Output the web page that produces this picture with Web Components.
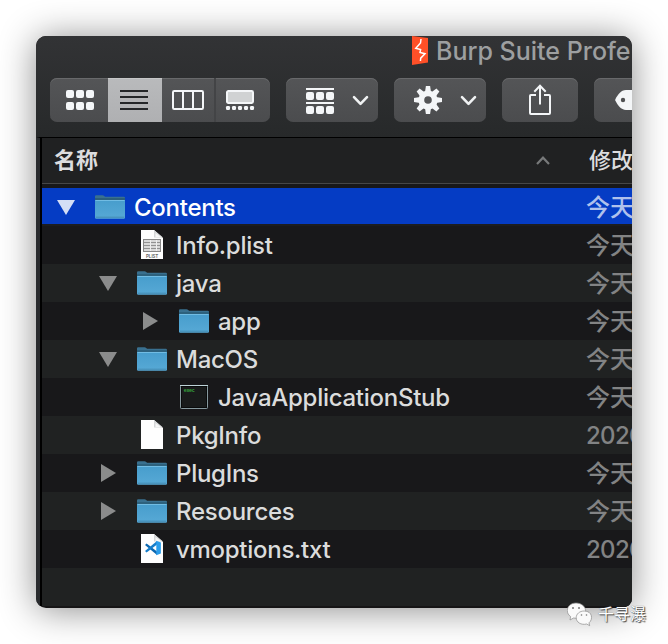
<!DOCTYPE html>
<html lang="zh">
<head>
<meta charset="utf-8">
<title>Finder</title>
<style>
html,body{margin:0;width:668px;height:644px;overflow:hidden;background:#fff}
body{font-family:Inter,"Noto Sans CJK SC",sans-serif}
</style>
</head>
<body>
<finder-page></finder-page>
<script>
const define = (name, html) => customElements.define(name, class extends HTMLElement {
  connectedCallback() {
    if (this.shadowRoot) return;
    const t = document.createElement('template');
    t.innerHTML = typeof html === 'function' ? html(this) : html;
    this.attachShadow({mode: 'open'}).append(t.content.cloneNode(true));
  }
});

const icons = {
  grid: [28, 20, '<g fill="#f4f6f8"><rect width="8" height="8" rx="2"/><rect x="10" width="8" height="8" rx="2"/><rect x="20" width="8" height="8" rx="2"/><rect y="12" width="8" height="8" rx="2"/><rect x="10" y="12" width="8" height="8" rx="2"/><rect x="20" y="12" width="8" height="8" rx="2"/></g>'],
  list: [28, 20, '<path d="M0 1h28M0 7h28M0 13h28M0 19h28" stroke="#242628" stroke-width="2"/>'],
  columns: [32, 20, '<rect x="1" y="1" width="30" height="18" rx="1.2" fill="none" stroke="#f4f6f8" stroke-width="2"/><path d="M11 1v18M21 1v18" stroke="#f4f6f8" stroke-width="2"/>'],
  gallery: [28, 20, '<rect x="1" y="1" width="26" height="12" rx="1.4" fill="#d0d2d3" stroke="#f4f6f8" stroke-width="2"/><g fill="#f4f6f8"><rect y="16" width="4" height="4" rx="1.2"/><rect x="6" y="16" width="4" height="4" rx="1.2"/><rect x="12" y="16" width="4" height="4" rx="1.2"/><rect x="18" y="16" width="4" height="4" rx="1.2"/><rect x="24" y="16" width="4" height="4" rx="1.2"/></g>'],
  group: [28, 26, '<g fill="#f4f6f8"><rect width="28" height="2"/><rect y="14" width="28" height="2"/><rect y="4" width="8" height="8" rx="2"/><rect x="10" y="4" width="8" height="8" rx="2"/><rect x="20" y="4" width="8" height="8" rx="2"/><rect y="18" width="8" height="8" rx="2"/><rect x="10" y="18" width="8" height="8" rx="2"/><rect x="20" y="18" width="8" height="8" rx="2"/></g>'],
  chevron: [16, 10, '<path d="M2 2.200 8.500 8.800 15 2.200" fill="none" stroke="#f0f2f3" stroke-width="2.600" stroke-linecap="round" stroke-linejoin="round"/>'],
  gear: [28, 28, '<g fill="#f4f6f8" transform="translate(14 14)">' + [0,45,90,135].map(a => `<path transform="rotate(${a})" d="M-2.100 -14h4.200l.9 6v16l-.9 6h-4.200l-.9-6v-16z"/>`).join('') + '<circle r="9.600"/><circle r="3.800" fill="#545557"/></g>'],
  share: [22, 31, '<path d="M7 11H1.900a.9.900 0 0 0-.9.900V29a.9.900 0 0 0 .9.900h18.200a.9.900 0 0 0 .9-.9V11.900a.9.900 0 0 0-.9-.9H15M11 20.500V2M5.300 7.800 11 1.800l5.700 6" fill="none" stroke="#f4f6f8" stroke-width="2"/>'],
  tag: [34, 20, '<path d="M.4 9.200C2.500 5 6 0 11 0h23v20H11C6 20 2.500 15 .4 10.800Q0 10 .4 9.200z" fill="#f4f6f8"/><circle cx="8" cy="10" r="2.200" fill="#505153"/>'],
  sort: [14, 9, '<path d="M1 8 7 1.700 13 8" fill="none" stroke="#77797a" stroke-width="2.200"/>'],
  burp: [16, 29, '<path d="M0 0 16 2v24.500L0 29z" fill="#ff5028"/><path d="M9 3 8.500 7 3.800 12.300l4.800 1.200L8 16.500l5 1.200-4.300 4.500L8.400 25" fill="none" stroke="#fff" stroke-width="1.500"/>'],
  down: [18, 15, '<path d="M0 0h18L9 15z" fill="currentColor"/>'],
  right: [15, 18, '<path d="M0 0v18l15-9z" fill="currentColor"/>'],
  folder: [30, 24, '<defs><linearGradient id="f" x2="0" y2="1"><stop stop-color="#479dcc"/><stop offset="1" stop-color="#57a9d6"/></linearGradient></defs><path d="M0 22V1.300Q0 .2 1.200.2h6.300q1 0 1.700.7l.9.900h18.700q1.200 0 1.200 1.200v19z" fill="#39708f"/><path d="M0 4h30" stroke="#285a75" stroke-width="1.300"/><path d="M0 5h30v17.500q0 1.200-1.200 1.200H1.200Q0 23.700 0 22.500z" fill="url(#f)"/><path d="M.5 5.500h29" stroke="#71bce3"/><path d="M.7 22.200h28.600" stroke="#448cb3"/>'],
  page: [22, 30, '<path d="M0 0h13l9 8v21H0z" fill="#fefefe"/><path d="M13 0v7.500h9z" fill="#d5d7d8"/><path d="M14.500 3v4H20z" fill="#f6f6f6"/>'],
  exec: [28, 24, '<rect x=".5" y=".5" width="27" height="23" rx=".8" fill="#191b1b" stroke="#86989d"/><path d="M0 .5h28" stroke="#bed3d8"/><rect x="1.500" y="1.500" width="25" height="21" fill="none" stroke="#090b0b"/><text x="3.800" y="7.300" textLength="11" font-family="Liberation Mono,monospace" font-weight="bold" font-size="5" fill="#35a23d">exec</text>']
};
icons.plist = [22, 30, icons.page[2] + '<rect x="2.500" y="9.500" width="17" height="12" fill="#eee" stroke="#888"/><path d="M3 12.500h16M3 15.500h16M3 18.500h16" stroke="#929292"/><path d="M3 11h16M3 14h16M3 17h16M3 20h16" stroke="#c4c4c4"/><path d="M9.500 10v11M15.500 10v11" stroke="#eee"/><text x="5" y="28" textLength="12" lengthAdjust="spacingAndGlyphs" font-family="Liberation Sans,sans-serif" font-weight="bold" font-size="4.700" fill="#666">PLIST</text>'];
icons.code = [22, 30, icons.page[2] + '<path d="M4 10.900 5.600 9.600 16 17.500V21z" fill="#0b67b1"/><path d="M4 17.100 5.600 18.400 16 10.500V7z" fill="#167dca"/><path d="m15.300 6.700 4.600 1.900v10.800l-4.600 1.900z" fill="#2a9deb"/>'];

define('ui-icon', el => {
  const [w, h, body] = icons[el.getAttribute('name')];
  return `<style>:host{display:block;flex:none;width:${w}px;height:${h}px}svg{display:block;overflow:visible}</style><svg width="${w}" height="${h}" viewBox="0 0 ${w} ${h}">${body}</svg>`;
});

define('tool-button', `<style>
:host{display:flex;box-sizing:border-box;flex:none;height:44px;border-radius:7px;overflow:hidden;align-items:center;justify-content:center;background:linear-gradient(#545557,#4b4c4e);box-shadow:inset 0 1px #68696b}
</style><slot></slot>`);

define('view-switch', `<style>
:host{display:grid;grid-template-columns:58px 54px 52px 56px;flex:none;height:44px;border-radius:7px;overflow:hidden;background:linear-gradient(#545557,#4b4c4e);box-shadow:inset 0 1px #68696b}
div{display:flex;align-items:center;box-sizing:border-box}
.first{padding-left:16px}
.on{padding-left:12px;background:linear-gradient(#b9babc,#afb0b2);box-shadow:inset 0 1px #c6c7c8}
.cols{padding-left:10px}
.last{border-left:2px solid #434446;padding-left:10px}
</style><div class="first"><ui-icon name="grid"></ui-icon></div><div class="on"><ui-icon name="list"></ui-icon></div><div class="cols"><ui-icon name="columns"></ui-icon></div><div class="last"><ui-icon name="gallery"></ui-icon></div>`);

define('finder-toolbar', `<style>
:host{display:block;box-sizing:border-box;height:101px;background:linear-gradient(#323335,#27292a)}
.title{display:flex;height:42px;padding-left:376px;color:#9d9fa0;font-size:25px;font-weight:450;line-height:31px;white-space:nowrap}
.title span{margin-left:8px}
.tools{display:flex;gap:16px;padding-left:14px;width:700px}
.drop{width:92px;justify-content:flex-start}
.drop ui-icon:first-child{margin:0 18px 0 20px}
.drop ui-icon[name=group]{margin-top:2px}
</style>
<div class="title"><ui-icon name="burp"></ui-icon><span>Burp Suite Profe</span></div>
<div class="tools"><view-switch></view-switch>
<tool-button class="drop"><ui-icon name="group"></ui-icon><ui-icon name="chevron"></ui-icon></tool-button>
<tool-button class="drop"><ui-icon name="gear"></ui-icon><ui-icon name="chevron"></ui-icon></tool-button>
<tool-button style="width:76px"><ui-icon name="share" style="margin-top:-1px"></ui-icon></tool-button>
<tool-button style="width:92px;justify-content:flex-start;padding-left:21px"><ui-icon name="tag"></ui-icon></tool-button></div>`);

define('column-header', `<style>
:host{display:flex;box-sizing:border-box;height:46px;align-items:center;background:#202122;border-bottom:1px solid #464748;color:#dcddde;font-size:22px;font-weight:500;white-space:nowrap}
.name{flex:0 0 494px;padding-left:12px;font-weight:700;box-sizing:border-box}
.rule{width:2px;height:36px;margin:0 23px 0 16px;background:#38393b}
span{line-height:44px;padding-bottom:2px}
</style><span class="name">名称</span><ui-icon name="sort"></ui-icon><i class="rule"></i><span>修改</span>`);

define('file-row', el => {
  const a = n => el.getAttribute(n);
  return `<style>
:host{display:grid;grid-template-columns:544px 1fr;height:38px;align-items:center;background:#18181a;color:#dbdcdc;font-size:24px;font-weight:450;line-height:40px;white-space:nowrap;--mark:#8b8c8c;--date:#828384}
:host(:nth-of-type(odd)){background:#202222}
:host([selected]){background:linear-gradient(#053cc4 36px,#1c1d1f 36px);color:#fff;--mark:#d4def5;--date:#b0c1ec}
.main{display:flex;align-items:center;height:38px;padding-left:${+a('level') * 42}px}
.mark{display:flex;justify-content:center;width:48px;color:var(--mark)}
.icon{display:flex;justify-content:center;width:30px;margin:0 9px 0 5px}
.name,.date{height:38px}
.date{color:var(--date);letter-spacing:${a('date') ? -.7 : 0}px}
.name{letter-spacing:-.27px}
</style><div class="main"><span class="mark">${a('open') ? `<ui-icon name="${a('open')}"></ui-icon>` : ''}</span><span class="icon"><ui-icon name="${a('icon')}"></ui-icon></span><span class="name"><slot></slot></span></div><span class="date">${a('date') || '今天'}</span>`;
});

define('file-list', `<style>
:host{display:block;padding-top:4px;height:418px;background:#18181a}
.blank{height:38px;background:#202222}
</style>
<file-row selected level="0" open="down" icon="folder">Contents</file-row>
<file-row level="1" icon="plist">Info.plist</file-row>
<file-row level="1" open="down" icon="folder">java</file-row>
<file-row level="2" open="right" icon="folder">app</file-row>
<file-row level="1" open="down" icon="folder">MacOS</file-row>
<file-row level="2" icon="exec">JavaApplicationStub</file-row>
<file-row level="1" icon="page" date="2020">PkgInfo</file-row>
<file-row level="1" open="right" icon="folder">PlugIns</file-row>
<file-row level="1" open="right" icon="folder">Resources</file-row>
<file-row level="1" icon="code" date="2020">vmoptions.txt</file-row>
<div class="blank"></div>`);

define('finder-window', `<style>
:host{display:block;box-sizing:border-box;width:596px;height:572px;border-radius:10px;box-shadow:0 2px 36px rgba(0,0,0,.46);overflow:hidden;background:#161516}
.content{border-top:1px solid #000;border-left:4px solid #292b2e}
.inner{border-left:2px solid #000}
</style><finder-toolbar></finder-toolbar><div class="content"><div class="inner"><column-header></column-header><file-list></file-list></div></div>`);

define('page-credit', `<style>
:host{position:absolute;left:567px;top:602px;display:flex;align-items:center;gap:5px;height:25px;color:#fff;font-size:16px;line-height:25px;white-space:nowrap;text-shadow:1px 1px 1px #444,0 0 1px #555}
svg{flex:none}
</style><svg width="26" height="25" viewBox="0 0 26 25"><g fill="#fafafa" stroke="#8b8b8b" stroke-width=".7"><path d="M9 1C4 1 .3 4.300.3 8.500c0 2.500 1.200 4.600 3.300 6L3 18l3.500-2c7.500 1.400 12-2.500 12-7.500C18.500 4.300 14 1 9 1z"/><path d="M18 9c-4.500 0-8 2.900-8 6.700 0 4.500 4.800 7.700 10.500 6.300l3 1.700-.7-2.900c4.300-3.300 3.500-11.800-4.800-11.800z" transform="translate(-.8)"/></g><g fill="#777"><circle cx="6" cy="6" r="1"/><circle cx="12" cy="6" r="1"/><circle cx="14.500" cy="13" r=".8"/><circle cx="19.500" cy="13" r=".8"/></g></svg><span>千寻瀑</span>`);

define('finder-page', `<style>:host{display:block;box-sizing:border-box;position:relative;width:668px;height:644px;padding:36px;background:#fff;overflow:hidden}</style><finder-window></finder-window><page-credit></page-credit>`);
</script>
</body>
</html>
